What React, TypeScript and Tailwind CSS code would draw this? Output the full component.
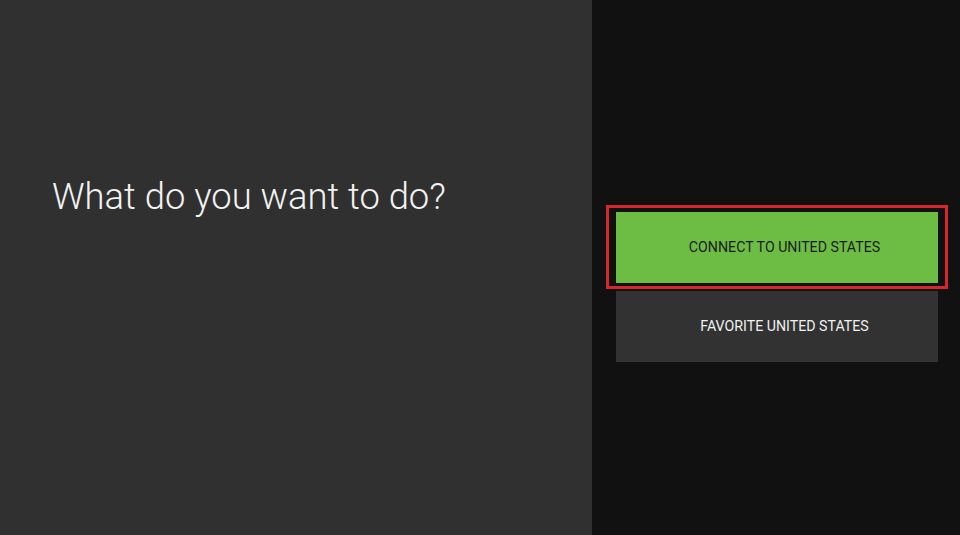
import React from "react";

export default function App() {
  return (
    <div
      className="flex h-[535px] w-[960px] overflow-hidden"
      style={{ fontFamily: "Roboto, 'Liberation Sans', sans-serif" }}
    >
      <div className="h-full w-[592px] bg-[#303030] pl-[52px] pt-[176px]">
        <h1 className="text-[36.4px] font-light leading-[42px] text-[#f2f2f2]">
          What do you want to do?
        </h1>
      </div>
      <div className="h-full flex-1 bg-[#111111] pl-[24px] pt-[212px]">
        <div className="flex w-[322px] flex-col gap-[8px]">
          <div className="relative">
            <div className="pointer-events-none absolute -bottom-[6px] -left-[10px] -right-[10px] -top-[7px] border-[3px] border-[#d7262d]" />
            <button className="flex h-[71px] w-full items-center justify-center bg-[#6dbd45] pl-[15px] pt-[1px] text-[14.2px] font-normal text-[#1b1b1b]">
              CONNECT TO UNITED STATES
            </button>
          </div>
          <button className="flex h-[71px] w-full items-center justify-center bg-[#323232] pl-[15px] pt-[1px] text-[14.2px] font-normal text-[#f0f0f0]">
            FAVORITE UNITED STATES
          </button>
        </div>
      </div>
    </div>
  );
}
